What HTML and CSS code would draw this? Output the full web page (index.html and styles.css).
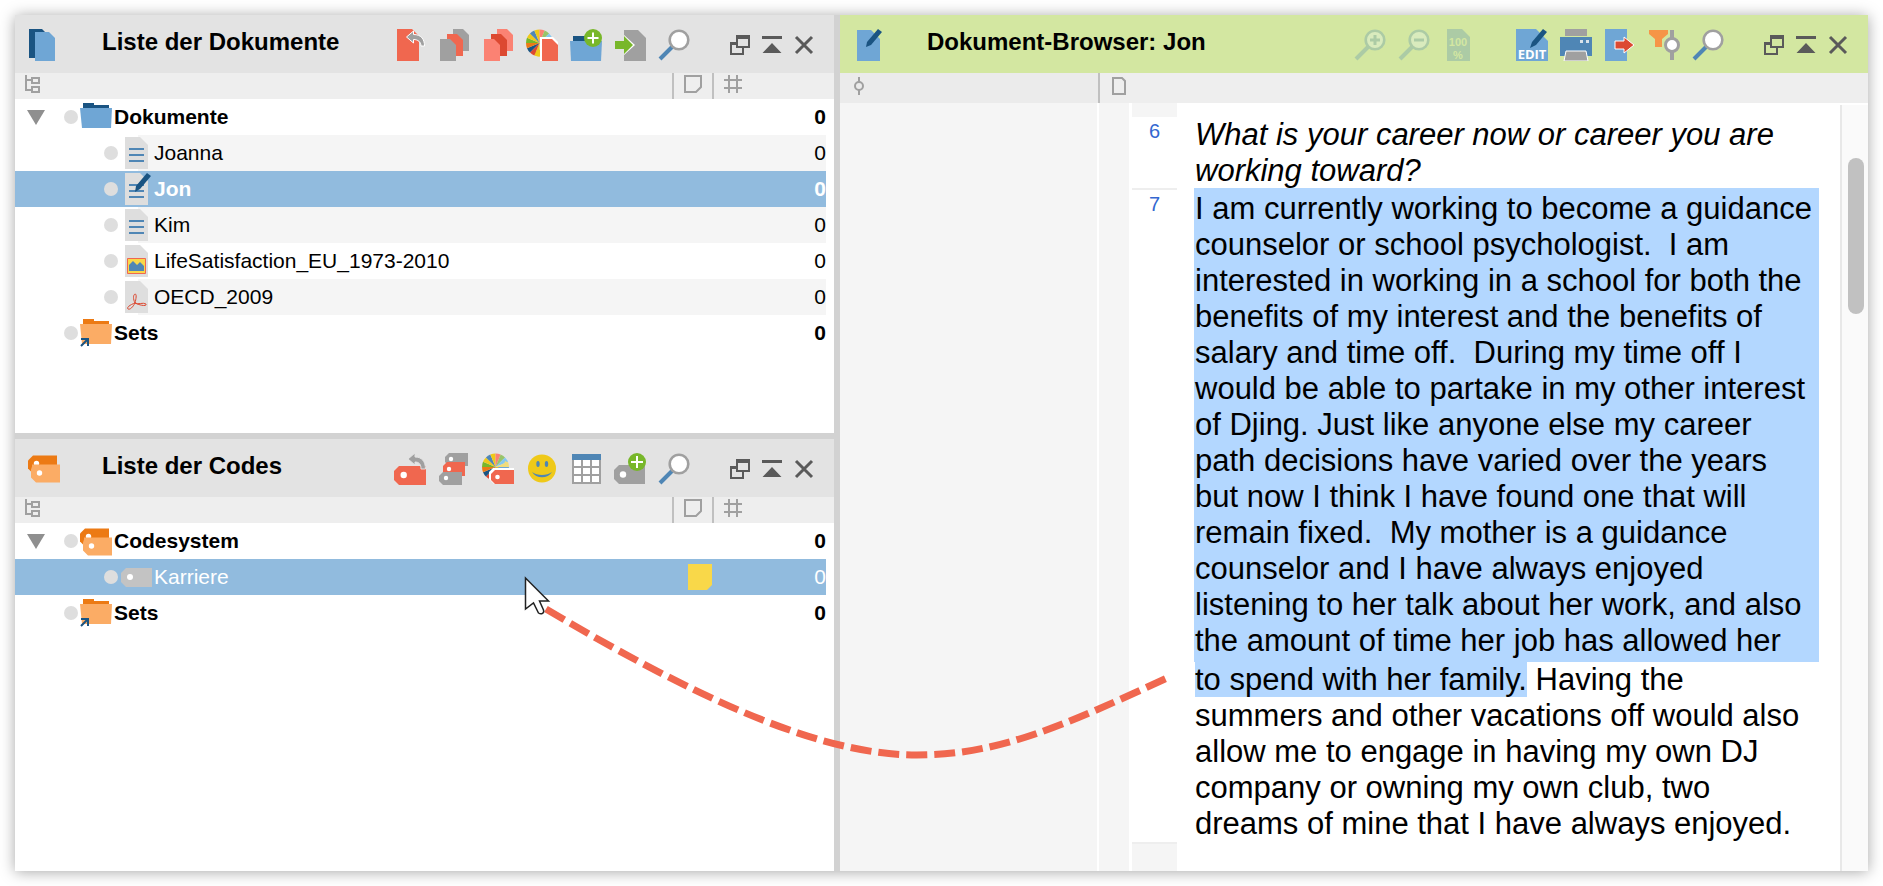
FILE: index.html
```html
<!DOCTYPE html>
<html lang="de">
<head>
    <meta charset="UTF-8">
    <meta name="viewport" content="width=device-width, initial-scale=1.0">
    <title>Dokument-Browser: Jon</title>
    <link rel="stylesheet" href="styles.css">
</head>
<body>
    <svg class="sprite" aria-hidden="true">
        <symbol id="docs" viewBox="0 0 32 32">
            <path d="M1 0h13l6 6v23H1z" fill="#1a5482"/>
            <path d="M7 3h14l6 6v23H7z" fill="#6fa6d5"/>
        </symbol>
        <symbol id="codes" viewBox="0 0 32 27">
            <path d="M5 0h24v16H3l-3-3V5z" fill="#ec7a14"/>
            <circle cx="8.500" cy="8" r="2.700" fill="#fff"/>
            <path d="M4 9h28v18H8l-5-5V14l1-3z" fill="#fbac65"/>
            <circle cx="11.500" cy="17.500" r="2.700" fill="#fff"/>
        </symbol>
        <symbol id="doc-pen" viewBox="0 0 32 32">
            <path d="M4 1h14l9 9v22H4z" fill="#6fa6d5"/>
            <path d="M13 18l1-5L25 0l4 3-11 13z" fill="#1a5482"/>
        </symbol>
        <symbol id="doc-undo" viewBox="0 0 32 32">
            <path d="M3 0h15l7 7v25H3z" fill="#f0674f"/>
            <path d="M12.500 8L19.500 2v3.500C27 5.500 30.500 10 30.500 17H27c0-4-3-6.500-7.500-6.500V14z" fill="#a0a0a0" stroke="#fff" stroke-width="1"/>
        </symbol>
        <symbol id="docs-grey" viewBox="0 0 32 32">
            <path d="M15 0h10l6 6v16H15z" fill="#a0a0a0"/>
            <path d="M9 5h10l6 6v16H9z" fill="#f0674f"/>
            <path d="M2 10h10l6 6v16H2z" fill="#a0a0a0"/>
        </symbol>
        <symbol id="docs-red" viewBox="0 0 32 32">
            <path d="M15 0h10l6 6v16H15z" fill="#fb8273"/>
            <path d="M9 5h10l6 6v16H9z" fill="#dc4931"/>
            <path d="M2 10h10l6 6v16H2z" fill="#fb8273"/>
        </symbol>
        <symbol id="wheel" viewBox="0 0 32 32">
            <g fill="none" stroke-width="13.500" stroke-dasharray="1 15">
                <circle cx="13.500" cy="14" r="6.750" pathLength="16" stroke="#6fa6d5"/>
                <circle cx="13.500" cy="14" r="6.750" pathLength="16" stroke="#f0674f" stroke-dashoffset="-1"/>
                <circle cx="13.500" cy="14" r="6.750" pathLength="16" stroke="#78b72a" stroke-dashoffset="-2"/>
                <circle cx="13.500" cy="14" r="6.750" pathLength="16" stroke="#efc919" stroke-dashoffset="-3"/>
                <circle cx="13.500" cy="14" r="6.750" pathLength="16" stroke="#efc919" stroke-dashoffset="-4"/>
                <circle cx="13.500" cy="14" r="6.750" pathLength="16" stroke="#dc4931" stroke-dashoffset="-5"/>
                <circle cx="13.500" cy="14" r="6.750" pathLength="16" stroke="#1a5482" stroke-dashoffset="-6"/>
                <circle cx="13.500" cy="14" r="6.750" pathLength="16" stroke="#ec7a14" stroke-dashoffset="-7"/>
                <circle cx="13.500" cy="14" r="6.750" pathLength="16" stroke="#78b72a" stroke-dashoffset="-8"/>
                <circle cx="13.500" cy="14" r="6.750" pathLength="16" stroke="#efc919" stroke-dashoffset="-9"/>
                <circle cx="13.500" cy="14" r="6.750" pathLength="16" stroke="#4f86b5" stroke-dashoffset="-10"/>
                <circle cx="13.500" cy="14" r="6.750" pathLength="16" stroke="#efc919" stroke-dashoffset="-11"/>
                <circle cx="13.500" cy="14" r="6.750" pathLength="16" stroke="#fb8273" stroke-dashoffset="-12"/>
                <circle cx="13.500" cy="14" r="6.750" pathLength="16" stroke="#98c46a" stroke-dashoffset="-13"/>
                <circle cx="13.500" cy="14" r="6.750" pathLength="16" stroke="#84c8f0" stroke-dashoffset="-14"/>
                <circle cx="13.500" cy="14" r="6.750" pathLength="16" stroke="#f0dc7c" stroke-dashoffset="-15"/>
            </g>
        </symbol>
        <symbol id="wheel-doc" viewBox="0 0 32 32">
            <use href="#wheel" width="32" height="32"/>
            <path d="M14 8h13l6 6v20H14z" fill="#fff"/>
            <path d="M16 10h10l6 6v16H16z" fill="#f0674f"/>
        </symbol>
        <symbol id="wheel-tag" viewBox="0 0 32 32">
            <use href="#wheel" width="32" height="32"/>
            <path d="M7 19l4-4h21v4L12 31l-5-5z" fill="#fff"/>
            <path d="M13 17h19v14H13l-4-4v-6z" fill="#f0674f"/>
            <circle cx="15.500" cy="24" r="2.300" fill="#fff"/>
        </symbol>
        <symbol id="folder-add" viewBox="0 0 32 32">
            <path d="M3 7h14v6H3z" fill="#1a5482"/>
            <path d="M0 12h32l-1 20H1z" fill="#6fa6d5"/>
            <circle cx="23" cy="9" r="9" fill="#78b72a"/>
            <path d="M23 3.500v11M17.500 9h11" stroke="#fff" stroke-width="2"/>
        </symbol>
        <symbol id="doc-import" viewBox="0 0 32 32">
            <path d="M10 1h14l8 8v23H10z" fill="#a0a0a0"/>
            <path d="M10 6l11 10-11 10" fill="#fff"/>
            <path d="M1 12h9V7l9 9-9 9v-5H1z" fill="#78b72a"/>
        </symbol>
        <symbol id="search" viewBox="0 0 32 32">
            <path d="M14 18L2 30" stroke="#4f86b5" stroke-width="4"/>
            <circle cx="21" cy="11" r="9.300" fill="#fff" stroke="#a0a0a0" stroke-width="2.600"/>
        </symbol>
        <symbol id="float" viewBox="0 0 20 20">
            <path d="M7 3h12v9H7z" fill="none" stroke="#5a5a5a" stroke-width="2"/>
            <path d="M6 0h14v4H6z" fill="#5a5a5a"/>
            <path d="M6 8H1v11h12v-6M1 9h5" fill="none" stroke="#5a5a5a" stroke-width="2"/>
        </symbol>
        <symbol id="collapse" viewBox="0 0 20 20">
            <path d="M0 1h20v3H0zM10 8l9.500 10H.5z" fill="#5a5a5a"/>
        </symbol>
        <symbol id="close" viewBox="0 0 20 20">
            <path d="M2 2l16 16M18 2L2 18" stroke="#5a5a5a" stroke-width="3"/>
        </symbol>
        <symbol id="tag-undo" viewBox="0 0 32 32">
            <path d="M5 13h27v19H5l-5-5v-9z" fill="#f0674f"/>
            <circle cx="9.700" cy="22" r="3.200" fill="#fff"/>
            <path d="M14 6l7-6v4c6.500 0 10.500 4 10.500 12H27c0-5-2-7-6-7v3z" fill="#a0a0a0" stroke="#e3e3e3" stroke-width="1"/>
        </symbol>
        <symbol id="tags" viewBox="0 0 32 32">
            <path d="M11 0h19v13H11l-4-4V4z" fill="#a0a0a0"/>
            <circle cx="13" cy="6" r="2.200" fill="#fff"/>
            <path d="M9 9h18v14H9l-4-4v-6z" fill="#f0674f"/>
            <circle cx="11" cy="16" r="2.200" fill="#fff"/>
            <path d="M5 19h19v13H5l-4-4v-5z" fill="#a0a0a0"/>
            <circle cx="8" cy="25" r="2.200" fill="#fff"/>
        </symbol>
        <symbol id="smiley" viewBox="0 0 32 32">
            <circle cx="16" cy="15.500" r="14" fill="#efc919"/>
            <ellipse cx="12" cy="11" rx="1.700" ry="3" fill="#4f86b5"/>
            <ellipse cx="20.500" cy="11" rx="1.700" ry="3" fill="#4f86b5"/>
            <path d="M6 19c5 4 15 4 20 0-4 7-16 7-20 0z" fill="#4f86b5"/>
        </symbol>
        <symbol id="grid" viewBox="0 0 32 32">
            <path d="M2 1h29v30H2z" fill="#a0a0a0"/>
            <path d="M2 1h29v6H2z" fill="#4f86b5"/>
            <path d="M4 7h7v6H4zm9 0h7v6h-7zm9 0h7v6h-7zM4 15h7v6H4zm9 0h7v6h-7zm9 0h7v6h-7zM4 23h7v6H4zm9 0h7v6h-7zm9 0h7v6h-7z" fill="#fff"/>
        </symbol>
        <symbol id="tag-add" viewBox="0 0 32 32">
            <path d="M5 12h26v19H5l-5-5v-9z" fill="#a0a0a0"/>
            <circle cx="9" cy="21.500" r="3.200" fill="#fff"/>
            <circle cx="23" cy="9" r="9" fill="#78b72a"/>
            <path d="M23 3v12M17 9h12" stroke="#fff" stroke-width="2"/>
        </symbol>
        <symbol id="zoom-in" viewBox="0 0 32 32">
            <path d="M14 18L2 30" stroke="#accba5" stroke-width="4"/>
            <circle cx="21" cy="11" r="9.300" fill="#d9ebbd" stroke="#accba5" stroke-width="2.600"/>
            <path d="M21 6v10M16 11h10" stroke="#accba5" stroke-width="3"/>
        </symbol>
        <symbol id="zoom-out" viewBox="0 0 32 32">
            <path d="M14 18L2 30" stroke="#accba5" stroke-width="4"/>
            <circle cx="21" cy="11" r="9.300" fill="#d9ebbd" stroke="#accba5" stroke-width="2.600"/>
            <path d="M16 11h10" stroke="#accba5" stroke-width="3"/>
        </symbol>
        <symbol id="edit" viewBox="0 0 32 32">
            <path d="M0 0h20l12 12v20H0z" fill="#6fa6d5"/>
            <path d="M14 19l2-6L27 0l4 3-11 13z" fill="#1a5482"/>
        </symbol>
        <symbol id="print" viewBox="0 0 32 32">
            <path d="M5 0h22v7H5z" fill="#a0a0a0"/>
            <path d="M0 8h32v19H0z" fill="#4f86b5"/>
            <path d="M20 11h3v3h-3zm6 0h3v3h-3z" fill="#d9e3ea"/>
            <path d="M6 22h20l2 10H4z" fill="#a0a0a0" stroke="#fff" stroke-width="1"/>
        </symbol>
        <symbol id="export" viewBox="0 0 32 32">
            <path d="M1 0h22v32H1z" fill="#6fa6d5"/>
            <path d="M11 12h9V8l10 8-10 8v-4h-9z" fill="#dc4931" stroke="#fff" stroke-width="1"/>
        </symbol>
        <symbol id="filter" viewBox="0 0 32 32">
            <path d="M1 1h19v4l-6 5v8H7v-8L1 5z" fill="#f69547"/>
            <path d="M24 1v30" stroke="#a0a0a0" stroke-width="4"/>
            <circle cx="24" cy="16" r="6.500" fill="#fff" stroke="#a0a0a0" stroke-width="3"/>
        </symbol>
        <symbol id="tree" viewBox="0 0 15 18">
            <path d="M1 0v15h5M1 5h5M7 3h7v5H7zM7 12h7v5H7z" fill="none" stroke="#a0a0a0" stroke-width="2"/>
        </symbol>
        <symbol id="note" viewBox="0 0 18 18">
            <path d="M1 1h16v11l-5 5H1z" fill="none" stroke="#a0a0a0" stroke-width="2"/>
        </symbol>
        <symbol id="hash" viewBox="0 0 18 18">
            <path d="M5 0v18M13 0v18M0 5h18M0 13h18" stroke="#a0a0a0" stroke-width="2"/>
        </symbol>
        <symbol id="arrow" viewBox="0 0 18 15">
            <path d="M0 0h18L9 15z" fill="#8f8f8f"/>
        </symbol>
        <symbol id="folder" viewBox="0 0 32 30">
            <path d="M3 0h11v2h15v5H3z" fill="#1a5482"/>
            <path d="M0 5h32l-1 20H2z" fill="#6fa6d5"/>
        </symbol>
        <symbol id="set" viewBox="0 0 32 30">
            <path d="M3 0h11v2h15v5H3z" fill="#ec7a14"/>
            <path d="M0 5h32l-1 20H2z" fill="#fbac65"/>
            <path d="M1 27l7-7M1 20h7v7" fill="none" stroke="#1a5482" stroke-width="2"/>
        </symbol>
        <symbol id="doc" viewBox="0 0 29 32">
            <path d="M0 0h15l8 8v24H0z" fill="#dedede"/>
            <path d="M4 12h15M4 18h15M4 24h15" stroke="#4f86b5" stroke-width="2"/>
        </symbol>
        <symbol id="doc-edit" viewBox="0 0 29 32">
            <use href="#doc" width="29" height="32"/>
            <path d="M10 19l1-6L22 0l4 3-11 13z" fill="#1a5482"/>
        </symbol>
        <symbol id="doc-image" viewBox="0 0 29 32">
            <path d="M0 0h15l8 8v24H0z" fill="#dedede"/>
            <path d="M2.500 13.500h18v15h-18z" fill="#f9d849" stroke="#f0674f" stroke-width="1"/>
            <path d="M4 26v-6l4-4 4 4 3-3 4 4v5z" fill="#4f86b5"/>
        </symbol>
        <symbol id="doc-pdf" viewBox="0 0 29 32">
            <path d="M0 0h15l8 8v24H0z" fill="#dedede"/>
            <path d="M10 13c2 0 1 5 0 9 3 2 8-1 11 1 1 3-7 1-11-1-2 4-5 7-7 6-2-2 4-5 7-6-2-4-2-8 0-9z" fill="none" stroke="#dc4931" stroke-width="1"/>
        </symbol>
        <symbol id="tag-grey" viewBox="0 0 31 19">
            <path d="M5 0h26v19H5l-5-5V5z" fill="#c3c3c3"/>
            <circle cx="9" cy="9" r="3" fill="#fff"/>
        </symbol>
        <symbol id="memo" viewBox="0 0 24 26">
            <path d="M0 0h24v21l-5 5H0z" fill="#f9d849"/>
        </symbol>
        <symbol id="coding" viewBox="0 0 10 18">
            <path d="M5 0v5M5 13v5" stroke="#a0a0a0" stroke-width="2"/>
            <circle cx="5" cy="9" r="4" fill="none" stroke="#a0a0a0" stroke-width="2"/>
        </symbol>
        <symbol id="page" viewBox="0 0 14 18">
            <path d="M1 1h9l3 3v13H1z" fill="none" stroke="#a0a0a0" stroke-width="2"/>
        </symbol>
    </svg>

    <main class="window">
        <div class="lists">
            <section class="panel">
                <header class="panel-header">
                    <svg class="icon"><use href="#docs"/></svg>
                    <h2>Liste der Dokumente</h2>
                    <div class="toolbar">
                        <button aria-label="Aktivierungen aufheben"><svg class="icon"><use href="#doc-undo"/></svg></button>
                        <button aria-label="Dokumente aktivieren"><svg class="icon"><use href="#docs-grey"/></svg></button>
                        <button aria-label="Nur aktivierte Dokumente"><svg class="icon"><use href="#docs-red"/></svg></button>
                        <button aria-label="Aktivieren nach Farbe"><svg class="icon"><use href="#wheel-doc"/></svg></button>
                        <button aria-label="Neue Dokumentgruppe"><svg class="icon"><use href="#folder-add"/></svg></button>
                        <button aria-label="Dokumente importieren"><svg class="icon"><use href="#doc-import"/></svg></button>
                        <button aria-label="Suchen"><svg class="icon"><use href="#search"/></svg></button>
                        <div class="window-buttons">
                            <button aria-label="Abdocken"><svg class="icon-small"><use href="#float"/></svg></button>
                            <button aria-label="Minimieren"><svg class="icon-small"><use href="#collapse"/></svg></button>
                            <button aria-label="Schließen"><svg class="icon-small"><use href="#close"/></svg></button>
                        </div>
                    </div>
                </header>
                <div class="columns">
                    <span class="col-name"><svg class="icon-tree"><use href="#tree"/></svg></span>
                    <span class="col-memo"><svg class="icon-col"><use href="#note"/></svg></span>
                    <span class="col-count"><svg class="icon-col"><use href="#hash"/></svg></span>
                </div>
                <div class="rows">
                    <table>
                        <tr class="group">
                            <td><div class="name"><svg class="toggle"><use href="#arrow"/></svg><i class="dot"></i><svg class="icon-group"><use href="#folder"/></svg>Dokumente</div></td>
                            <td class="memo"></td>
                            <td class="count">0</td>
                        </tr>
                        <tr class="alt">
                            <td><div class="name child"><i class="dot"></i><svg class="icon-doc"><use href="#doc"/></svg>Joanna</div></td>
                            <td class="memo"></td>
                            <td class="count">0</td>
                        </tr>
                        <tr class="group active">
                            <td><div class="name child"><i class="dot"></i><svg class="icon-doc"><use href="#doc-edit"/></svg>Jon</div></td>
                            <td class="memo"></td>
                            <td class="count">0</td>
                        </tr>
                        <tr class="alt">
                            <td><div class="name child"><i class="dot"></i><svg class="icon-doc"><use href="#doc"/></svg>Kim</div></td>
                            <td class="memo"></td>
                            <td class="count">0</td>
                        </tr>
                        <tr>
                            <td><div class="name child"><i class="dot"></i><svg class="icon-doc"><use href="#doc-image"/></svg>LifeSatisfaction_EU_1973-2010</div></td>
                            <td class="memo"></td>
                            <td class="count">0</td>
                        </tr>
                        <tr class="alt">
                            <td><div class="name child"><i class="dot"></i><svg class="icon-doc"><use href="#doc-pdf"/></svg>OECD_2009</div></td>
                            <td class="memo"></td>
                            <td class="count">0</td>
                        </tr>
                        <tr class="group">
                            <td><div class="name no-toggle"><i class="dot"></i><svg class="icon-group"><use href="#set"/></svg>Sets</div></td>
                            <td class="memo"></td>
                            <td class="count">0</td>
                        </tr>
                    </table>
                </div>
            </section>

            <section class="panel">
                <header class="panel-header">
                    <svg class="icon"><use href="#codes"/></svg>
                    <h2>Liste der Codes</h2>
                    <div class="toolbar">
                        <button aria-label="Code-Aktivierungen aufheben"><svg class="icon"><use href="#tag-undo"/></svg></button>
                        <button aria-label="Codes aktivieren"><svg class="icon"><use href="#tags"/></svg></button>
                        <button aria-label="Codes nach Farbe"><svg class="icon"><use href="#wheel-tag"/></svg></button>
                        <button aria-label="Emoticode"><svg class="icon"><use href="#smiley"/></svg></button>
                        <button aria-label="Tabelle"><svg class="icon"><use href="#grid"/></svg></button>
                        <button aria-label="Neuer Code"><svg class="icon"><use href="#tag-add"/></svg></button>
                        <button aria-label="Suchen"><svg class="icon"><use href="#search"/></svg></button>
                        <div class="window-buttons">
                            <button aria-label="Abdocken"><svg class="icon-small"><use href="#float"/></svg></button>
                            <button aria-label="Minimieren"><svg class="icon-small"><use href="#collapse"/></svg></button>
                            <button aria-label="Schließen"><svg class="icon-small"><use href="#close"/></svg></button>
                        </div>
                    </div>
                </header>
                <div class="columns">
                    <span class="col-name"><svg class="icon-tree"><use href="#tree"/></svg></span>
                    <span class="col-memo"><svg class="icon-col"><use href="#note"/></svg></span>
                    <span class="col-count"><svg class="icon-col"><use href="#hash"/></svg></span>
                </div>
                <div class="rows">
                    <table>
                        <tr class="group">
                            <td><div class="name"><svg class="toggle"><use href="#arrow"/></svg><i class="dot"></i><svg class="icon-group"><use href="#codes"/></svg>Codesystem</div></td>
                            <td class="memo"></td>
                            <td class="count">0</td>
                        </tr>
                        <tr class="active">
                            <td><div class="name child"><i class="dot"></i><svg class="icon-tag"><use href="#tag-grey"/></svg>Karriere</div></td>
                            <td class="memo"><svg class="icon-memo"><use href="#memo"/></svg></td>
                            <td class="count">0</td>
                        </tr>
                        <tr class="group">
                            <td><div class="name no-toggle"><i class="dot"></i><svg class="icon-group"><use href="#set"/></svg>Sets</div></td>
                            <td class="memo"></td>
                            <td class="count">0</td>
                        </tr>
                    </table>
                </div>
            </section>
        </div>

        <section class="panel browser">
            <header class="panel-header">
                <svg class="icon"><use href="#doc-pen"/></svg>
                <h2>Dokument-Browser: Jon</h2>
                <div class="toolbar">
                    <button aria-label="Vergrößern" disabled><svg class="icon"><use href="#zoom-in"/></svg></button>
                    <button aria-label="Verkleinern" disabled><svg class="icon"><use href="#zoom-out"/></svg></button>
                    <button aria-label="Originalgröße" disabled>
                        <svg class="icon" viewBox="0 0 32 32">
                            <path d="M5 0h15l8 8v24H5z" fill="#accba5"/>
                            <text class="zoom-text" x="16" y="17">100</text>
                            <text class="zoom-text" x="16" y="30">%</text>
                        </svg>
                    </button>
                    <button class="edit-button" aria-label="Bearbeiten">
                        <svg class="icon" viewBox="0 0 32 32">
                            <use href="#edit" width="32" height="32"/>
                            <text class="edit-text" x="16" y="30">EDIT</text>
                        </svg>
                    </button>
                    <button aria-label="Drucken"><svg class="icon"><use href="#print"/></svg></button>
                    <button aria-label="Exportieren"><svg class="icon"><use href="#export"/></svg></button>
                    <button aria-label="Codings filtern"><svg class="icon"><use href="#filter"/></svg></button>
                    <button aria-label="Suchen"><svg class="icon"><use href="#search"/></svg></button>
                    <div class="window-buttons">
                        <button aria-label="Abdocken"><svg class="icon-small"><use href="#float"/></svg></button>
                        <button aria-label="Minimieren"><svg class="icon-small"><use href="#collapse"/></svg></button>
                        <button aria-label="Schließen"><svg class="icon-small"><use href="#close"/></svg></button>
                    </div>
                </div>
            </header>
            <div class="columns">
                <span class="col-coding"><svg class="icon-coding"><use href="#coding"/></svg></span>
                <span class="col-page"><svg class="icon-page"><use href="#page"/></svg></span>
            </div>
            <div class="document">
                <div class="codings"></div>
                <div class="memos"></div>
                <div class="text">
                    <div class="number blank"></div>
                    <div></div>
                    <div class="number">6</div>
                    <p class="question">What is your career now or career you are working toward?</p>
                    <div class="number ruled">7</div>
                    <div class="answer">
                        <div class="selected">I am currently working to become a guidance counselor or school psychologist.&nbsp; I am interested in working in a school for both the benefits of my interest and the benefits of salary and time off.&nbsp; During my time off I would be able to partake in my other interest of Djing. Just like anyone else my career path decisions have varied over the years but now I think I have found one that will remain fixed.&nbsp; My mother is a guidance counselor and I have always enjoyed listening to her talk about her work, and also the amount of time her job has allowed her</div>
                        <div class="rest"><mark>to spend with her family.</mark> Having the summers and other vacations off would also allow me to engage in having my own DJ company or owning my own club, two dreams of mine that I have always enjoyed.</div>
                    </div>
                    <div class="number blank ruled"></div>
                    <div></div>
                </div>
                <div class="scrollbar"><div class="thumb"></div></div>
            </div>
        </section>
    </main>

    <!-- drag path from the selected text to the code -->
    <svg class="drag" width="700" height="220" viewBox="500 560 700 220" aria-hidden="true">
        <path d="M546 609C720 712 830 755 917 755C1000 755 1065 725 1167 678" fill="none" stroke="#f0674f" stroke-width="7" stroke-dasharray="21 7"/>
        <path d="M525.500 578v31l8-6 5 10c3 2 6 0 5-3l-4-9h9z" fill="#fff" stroke="#222" stroke-width="1.500"/>
    </svg>
</body>
</html>
```

FILE: styles.css
```css
* {
    box-sizing: border-box;
}

body {
    font-family: "Liberation Sans", Arial, sans-serif;
    font-size: 21px;
    color: #000;
    background-color: #fff;
    margin: 0;
    padding: 15px;
    height: 100vh;
}

h2, p {
    margin: 0;
}

svg {
    display: block;
    flex-shrink: 0;
}

button {
    display: block;
    padding: 0;
    border: none;
    background: none;
    cursor: pointer;
}

.sprite {
    position: absolute;
    width: 0;
    height: 0;
}

.window {
    display: grid;
    grid-template-columns: 819fr 1028fr;
    gap: 6px;
    height: 100%;
    background-color: #d2d2d2;
    box-shadow: 0 1px 14px rgba(0, 0, 0, 0.35);
}

.lists {
    display: grid;
    grid-template-rows: 418fr 432fr;
    gap: 6px;
    min-width: 0;
}

.panel {
    display: flex;
    flex-direction: column;
    min-width: 0;
    min-height: 0;
    background-color: #fff;
}

/* panel header */

.panel-header {
    display: flex;
    align-items: flex-start;
    height: 58px;
    padding: 0 20px 0 13px;
    background-color: #e3e3e3;
}

.panel-header > .icon {
    margin-top: 14px;
}

.browser .panel-header {
    background-color: #d3e7a1;
}

.panel-header h2 {
    font-size: 24px;
    line-height: 54px;
    margin-left: 42px;
    white-space: nowrap;
}

.toolbar {
    display: flex;
    align-items: center;
    gap: 12px;
    margin: 14px 0 0 auto;
}

.window-buttons {
    display: flex;
    gap: 12px;
    margin-left: 28px;
}

.edit-button {
    margin-left: 30px;
}

.icon {
    width: 32px;
    height: 32px;
    overflow: visible;
}

.icon-small {
    width: 20px;
    height: 20px;
}

.zoom-text, .edit-text {
    font-weight: bold;
    text-anchor: middle;
}

.zoom-text {
    font-size: 11px;
    fill: #d3e7a1;
}

.edit-text {
    font-family: "Open Sans", sans-serif;
    font-size: 13px;
    fill: #fff;
}

/* column heads */

.columns {
    display: flex;
    height: 26px;
    background-color: #eee;
}

.columns span {
    padding: 2px 10px 0;
}

.col-name {
    flex: 1;
}

.col-memo, .col-count, .col-page {
    border-left: 2px solid #c0c0c0;
}

.col-memo {
    width: 40px;
}

.col-count {
    width: 122px;
}

.icon-tree {
    width: 15px;
    height: 18px;
}

.icon-col {
    width: 18px;
    height: 18px;
}

.browser .columns {
    height: 30px;
}

.browser .columns span {
    padding: 4px 12px 0;
}

.col-coding {
    width: 258px;
    background-color: #ebebeb;
}

.col-page {
    flex: 1;
}

.icon-coding, .icon-page {
    width: 14px;
    height: 18px;
}

/* tree rows */

.rows {
    padding-right: 8px;
}

table {
    width: 100%;
    border-collapse: collapse;
}

td {
    height: 36px;
    padding: 0;
}

.name {
    display: flex;
    align-items: center;
    height: 36px;
    padding-left: 12px;
}

.name.no-toggle {
    padding-left: 49px;
}

.name.child {
    padding-left: 89px;
}

.toggle {
    width: 18px;
    height: 15px;
    margin-right: 19px;
}

.dot {
    width: 14px;
    height: 14px;
    border-radius: 50%;
    background-color: #dedede;
}

.icon-group {
    width: 32px;
    height: 30px;
    margin: 2px 2px 0;
}

.icon-doc {
    width: 29px;
    height: 32px;
    margin-left: 7px;
}

.icon-tag {
    width: 31px;
    height: 19px;
    margin: 0 2px 0 3px;
}

.memo {
    width: 40px;
}

.icon-memo {
    width: 24px;
    height: 26px;
    margin-left: auto;
}

.count {
    width: 114px;
    text-align: right;
}

.group {
    font-weight: bold;
}

.alt {
    background: linear-gradient(to right, #fff 123px, #f5f5f5 123px);
}

.active {
    background-color: #91bbde;
    color: #fff;
}

/* document view */

.document {
    display: flex;
    flex: 1;
    min-height: 0;
}

.codings {
    width: 257px;
    background-color: #f5f5f5;
}

.memos {
    width: 30px;
    margin: 0 3px 0 2px;
    background-color: #f5f5f5;
}

.text {
    flex: 1;
    display: grid;
    grid-template-columns: 45px 1fr;
    grid-template-rows: 14px 71px auto 1fr;
    column-gap: 17px;
    padding-right: 21px;
    font-size: 31px;
    line-height: 36px;
}

.number {
    font-size: 20px;
    line-height: 28px;
    text-align: center;
    color: #3367d0;
}

.ruled {
    border-top: 2px solid #eee;
}

.blank {
    background-color: #f5f5f5;
}

.question, .rest {
    padding: 0 4px 0 1px;
}

.question {
    font-style: italic;
}

.selected {
    padding: 3px 4px 3px 1px;
    background-color: #b3d7ff;
}

mark {
    background-color: #b3d7ff;
    color: inherit;
}

.scrollbar {
    width: 28px;
    margin-top: 2px;
    padding: 53px 4px 0 6px;
    border-left: 2px solid #e8e8e8;
    background-color: #fafafa;
}

.thumb {
    width: 16px;
    height: 156px;
    border-radius: 8px;
    background-color: #c1c1c1;
}

.drag {
    position: absolute;
    left: 500px;
    top: 560px;
    pointer-events: none;
}
```
